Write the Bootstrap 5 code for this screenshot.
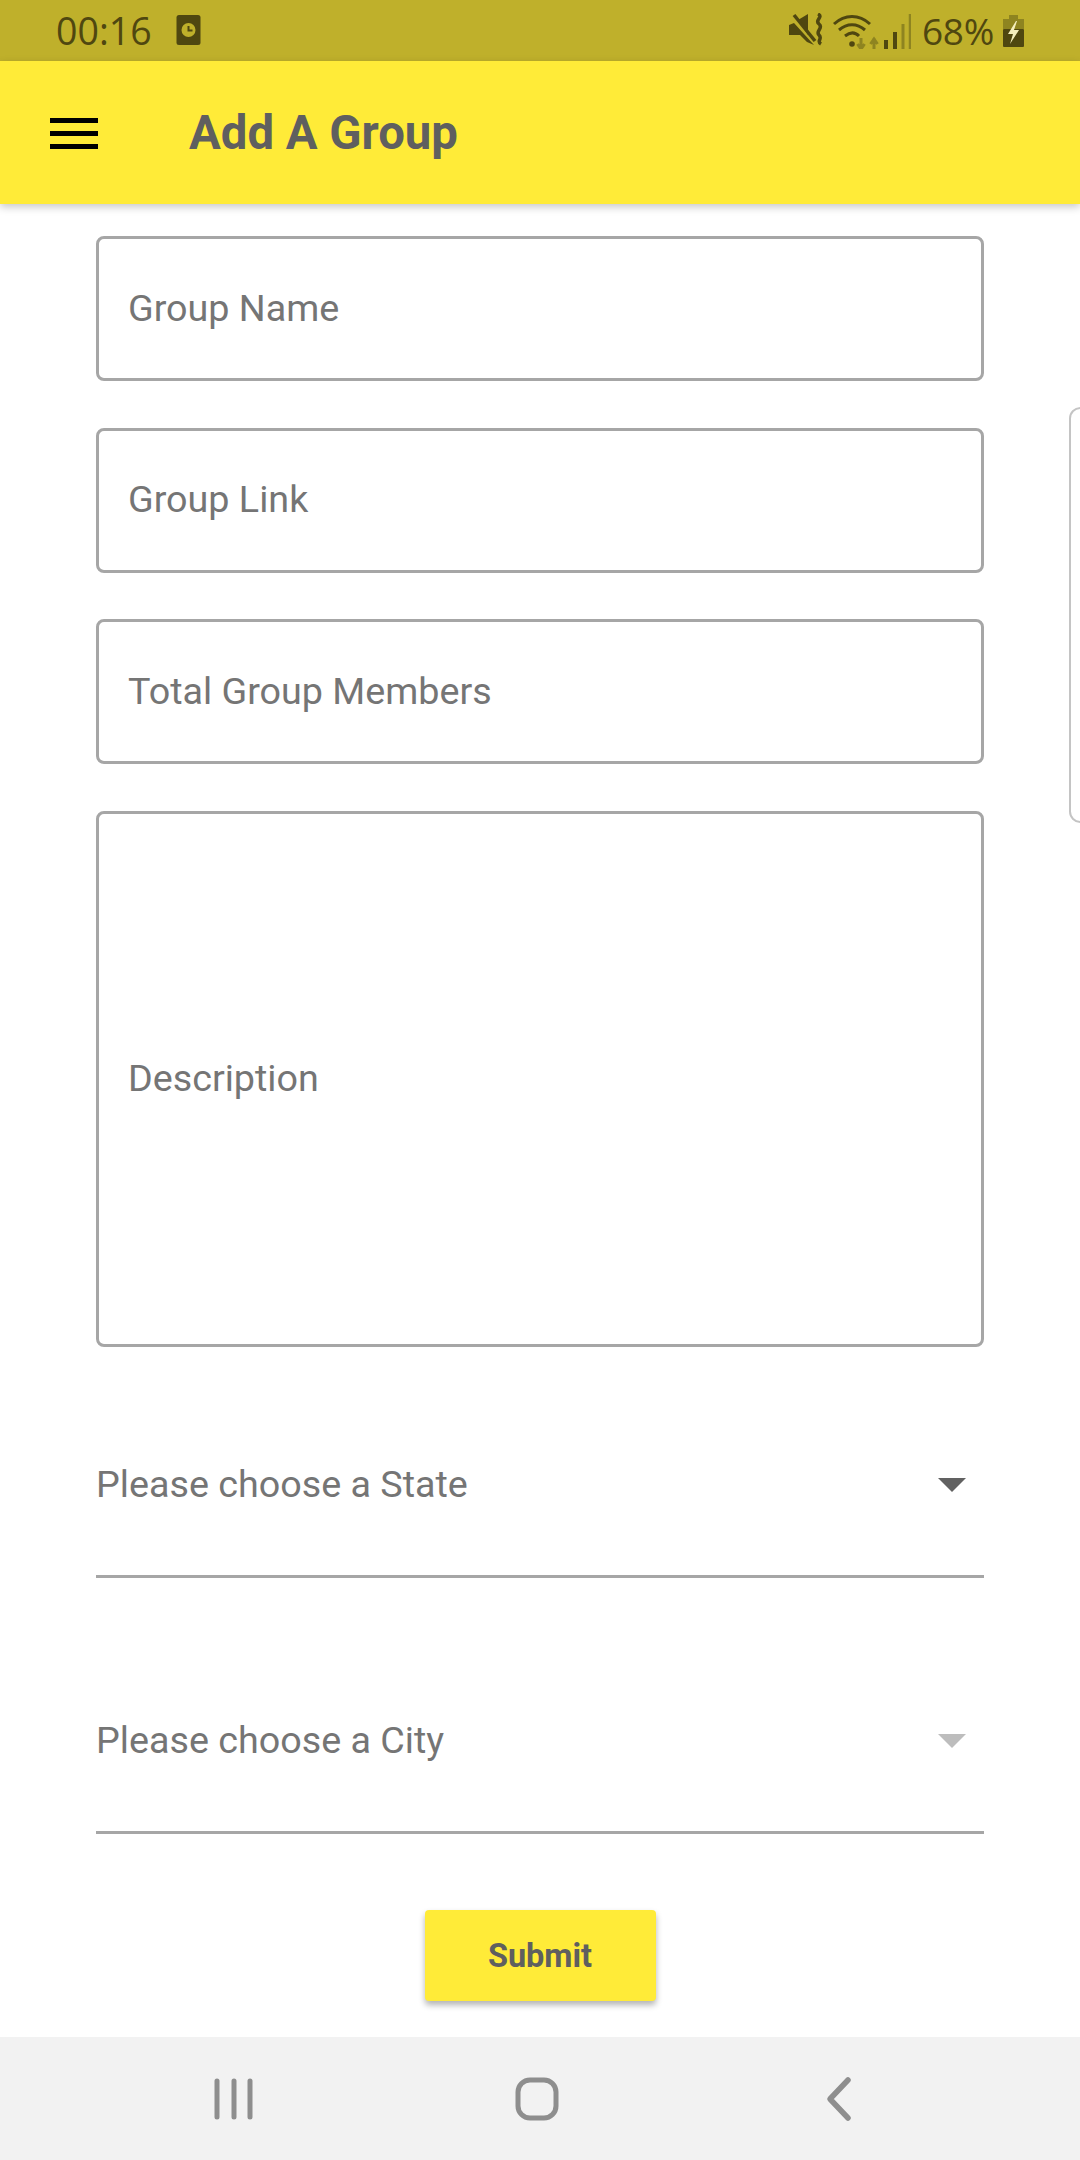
<!DOCTYPE html>
<html lang="en">
<head>
<meta charset="utf-8">
<title>Add A Group</title>
<link href="https://cdn.jsdelivr.net/npm/bootstrap@5.3.0/dist/css/bootstrap.min.css" rel="stylesheet">
<style>
html,body{margin:0;background:#fff}
.screen{width:1080px;height:2160px;font-family:Roboto,sans-serif;overflow:hidden;position:relative}
.statusbar{height:61px;background:#bfb02b;color:#4f4710;padding:0 56px 0 56px;font-family:"Open Sans",sans-serif;font-size:37.5px;line-height:61px}
.status-clock{width:25px;height:30px;margin-left:24px;margin-top:-1px}
.status-left{margin-top:-1px}
.status-right svg{display:block}
.pct{font-size:37px;letter-spacing:-.3px;margin:0 9px 0 11px}
.appbar{height:143px;background:#ffeb38;box-shadow:0 3px 8px rgba(0,0,0,.22);position:relative;z-index:2;padding-left:50px}
.burger{width:48px;display:flex;flex-direction:column;gap:8px;margin-top:1px}
.burger span{display:block;height:5px;background:#000}
.apptitle{font-size:47.3px;font-weight:700;color:#5f5f5f;margin:2px 0 0 91px;line-height:1}
.formarea{flex:1 1 auto;padding:32px 96px 0;min-height:0}
.formarea .form-control{height:145px;border:3px solid #a6a6a6;border-radius:8px;padding:0 29px;font-size:37.7px;color:#757575;background:#fff;margin-bottom:46.500px;display:flex;align-items:center;line-height:1.2}
.formarea .form-control.tall{height:536px;margin-bottom:0;padding-bottom:0}
.dropfield{padding:68px 0 67px;border-bottom:3px solid #a6a6a6;font-size:37.7px;line-height:48px;color:#757575;display:flex;justify-content:space-between;align-items:center}
.dropfield.first{margin-top:45px}
.dropfield.second{margin-top:70px}
.caret-down{width:0;height:0;border-left:14px solid transparent;border-right:14px solid transparent;border-top:14px solid #616161;margin-right:18px;margin-top:2px}
.caret-down.off{border-top-color:#bdbdbd}
.submit-wrap{margin-top:76px}
.submit-btn{width:231px;height:91px;background:#ffeb38;border:0;border-radius:4px;color:#5f5f5f;font-size:32.500px;font-weight:700;box-shadow:0 4px 6px rgba(0,0,0,.3);padding:2px 0 0}
.submit-btn:hover{background:#ffeb38;color:#5f5f5f}
.sysnav{height:123px;background:#f2f2f2;flex:0 0 auto}
.edge-panel{position:absolute;right:-12px;top:407px;width:23px;height:416px;border:2px solid #c4c4c4;border-radius:14px;background:#fff}
</style>
</head>
<body>
<div class="screen d-flex flex-column">
  <div class="statusbar d-flex justify-content-between align-items-center flex-shrink-0">
    <div class="status-left d-flex align-items-center">
      <span>00:16</span>
      <svg class="status-clock" viewBox="0 0 24 30" aria-hidden="true"><rect width="24" height="30" rx="2.5" fill="#4f4710"/><circle cx="12" cy="15" r="7" fill="#bfb02a"/><path d="M12 11v4.500h4" fill="none" stroke="#4f4710" stroke-width="2"/></svg>
    </div>
    <div class="status-right d-flex align-items-center">
      <svg width="122" height="36" viewBox="0 0 122 36" aria-hidden="true">
        <path d="M0 12l5-2 20 22-7-3-7-7H0z" fill="#4f4710"/>
        <path d="M9 7l10-6v21z" fill="#4f4710"/>
        <path d="M5 2l21 26" stroke="#4f4710" stroke-width="3.500"/>
        <path d="M29 1c6 3-4 6 1 10s-4 7 0 11-3 6 2 9" fill="none" stroke="#4f4710" stroke-width="3.500"/>
        <path d="M45 11c11-10 25-10 36 0M50 17c8-7 18-7 26 0M56 23c5-4 10-4 14 0" fill="none" stroke="#4f4710" stroke-width="3"/>
        <circle cx="63" cy="31" r="2.800" fill="#4f4710"/>
        <path d="M72 25v11M68.500 31l3.500 5 3.500-5" fill="none" stroke="#8e8420" stroke-width="3"/>
        <path d="M85 36V25M81.500 31l3.500-5 3.500 5" fill="none" stroke="#8e8420" stroke-width="3"/>
        <path d="M97 27v9" stroke="#4f4710" stroke-width="4"/><path d="M106 19v17" stroke="#4f4710" stroke-width="4"/><path d="M114 11v25" stroke="#8e8420" stroke-width="3"/><path d="M121 1v35" stroke="#8e8420" stroke-width="2.500"/>
      </svg>
      <span class="pct">68%</span>
      <svg width="21" height="32" viewBox="0 0 21 32" aria-hidden="true">
        <rect x="6" y="0" width="9" height="4" fill="#8e8420"/><rect x="0" y="4" width="21" height="10" fill="#8e8420"/><rect x="0" y="14" width="21" height="18" rx="1" fill="#4f4710"/>
        <path d="M13 6L5 19h5l-3 10 9-14h-5l3-9z" fill="#f4eebc"/>
      </svg>
    </div>
  </div>

  <header class="appbar d-flex align-items-center flex-shrink-0">
    <div class="burger"><span></span><span></span><span></span></div>
    <div class="apptitle">Add A Group</div>
  </header>

  <main class="formarea">
    <div class="form-control">Group Name</div>
    <div class="form-control">Group Link</div>
    <div class="form-control">Total Group Members</div>
    <div class="form-control tall">Description</div>
    <div class="dropfield first"><span>Please choose a State</span><span class="caret-down"></span></div>
    <div class="dropfield second"><span>Please choose a City</span><span class="caret-down off"></span></div>
    <div class="submit-wrap d-flex justify-content-center"><button type="button" class="btn submit-btn">Submit</button></div>
  </main>

  <div class="edge-panel"></div>

  <nav class="sysnav" aria-label="system">
    <svg width="1080" height="123" viewBox="0 0 1080 123" class="d-block" aria-hidden="true">
      <g fill="none" stroke="#8e8e8e" stroke-width="5" stroke-linecap="round" stroke-linejoin="round">
        <path d="M217 44v36M234 44v36M250 44v36"/>
        <rect x="518" y="43" width="38" height="38" rx="12"/>
        <path d="M848 43L830 62l18 19" stroke-width="5.500" />
      </g>
    </svg>
  </nav>
</div>
<script src="https://cdn.jsdelivr.net/npm/bootstrap@5.3.0/dist/js/bootstrap.bundle.min.js"></script>
</body>
</html>
